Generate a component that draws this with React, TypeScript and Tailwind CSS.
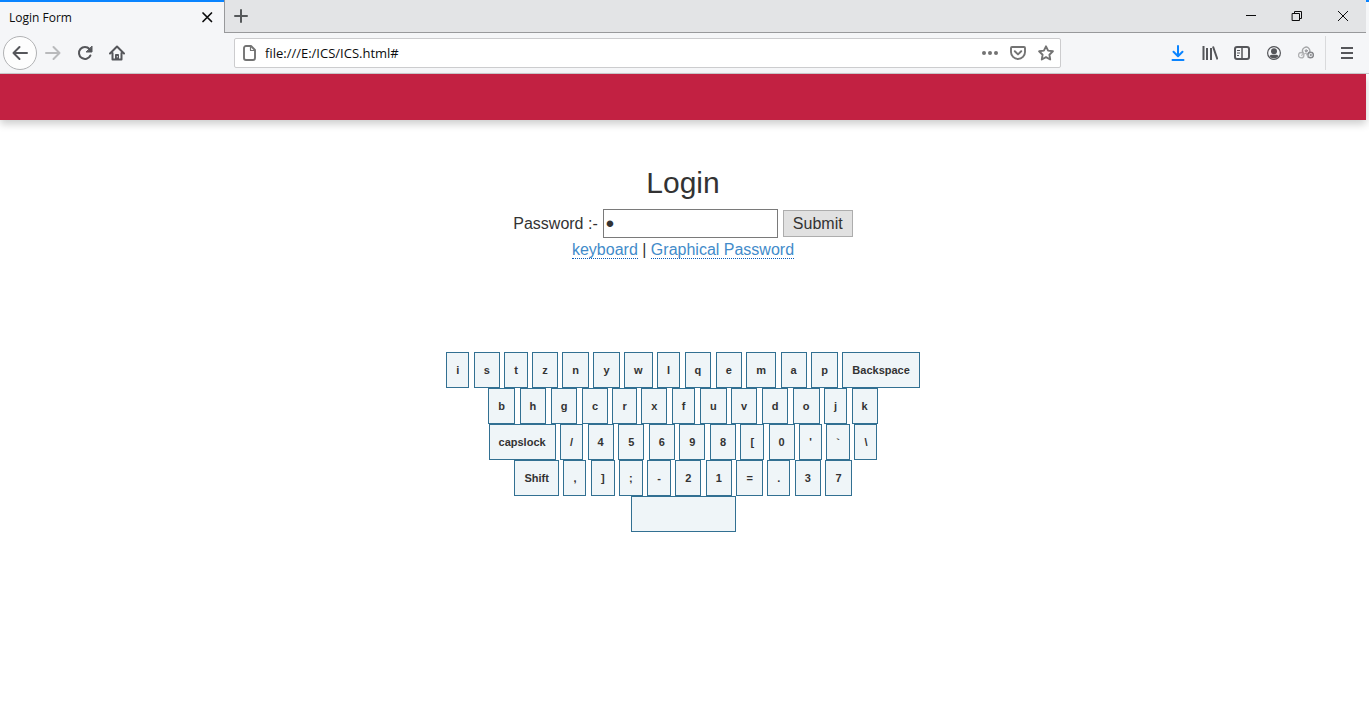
import React from 'react';

const keyRows: string[][] = [
  ['i', 's', 't', 'z', 'n', 'y', 'w', 'l', 'q', 'e', 'm', 'a', 'p', 'Backspace'],
  ['b', 'h', 'g', 'c', 'r', 'x', 'f', 'u', 'v', 'd', 'o', 'j', 'k'],
  ['capslock', '/', '4', '5', '6', '9', '8', '[', '0', "'", '`', '\\'],
  ['Shift', ',', ']', ';', '-', '2', '1', '=', '.', '3', '7'],
];

type IconProps = { children: React.ReactNode; className?: string };

function Icon({ children, className = '' }: IconProps) {
  return (
    <svg
      viewBox="0 0 16 16"
      aria-hidden="true"
      className={`block size-4 shrink-0 ${className}`}
      fill="none"
      stroke="currentColor"
      strokeWidth="2"
      strokeLinecap="round"
      strokeLinejoin="round"
    >
      {children}
    </svg>
  );
}

type ToolButtonProps = { label: string; className?: string; children: React.ReactNode };

function ToolButton({ label, className = '', children }: ToolButtonProps) {
  return (
    <button
      type="button"
      aria-label={label}
      className={`flex h-8 w-8 shrink-0 items-center justify-center ${className}`}
    >
      <Icon>{children}</Icon>
    </button>
  );
}

function TabBar() {
  return (
    <div className="flex h-[33px] bg-[#e3e4e6]">
      <div className="flex w-56 items-center justify-between border-t-2 border-[#0a84ff] bg-[#f5f6f8] pr-[9px] pl-[9px] text-xs text-[#0c0c0d]">
        <span>Login Form</span>
        <button type="button" aria-label="Close tab" className="flex items-center">
          <Icon>
            <path d="M4 3l8.500 8.500M12.500 3L4 11.500" strokeWidth="1.700" />
          </Icon>
        </button>
      </div>
      <div className="flex grow items-center justify-between border-b border-l border-[#98999b]">
        <button type="button" aria-label="New tab" className="flex h-8 w-8 items-center justify-center text-[#55585a]">
          <Icon>
            <path d="M8 2v12M2 8h12" />
          </Icon>
        </button>
        <div className="flex text-[#0c0c0d]">
          <button type="button" aria-label="Minimize" className="flex h-8 w-[46px] items-center justify-center">
            <Icon>
              <path d="M3 7.500h10" strokeWidth="1" strokeLinecap="butt" />
            </Icon>
          </button>
          <button type="button" aria-label="Restore" className="flex h-8 w-[46px] items-center justify-center">
            <Icon>
              <path d="M3.500 5.500h7v7h-7zM5.500 5.500v-2h7v7h-2" strokeWidth="1" strokeLinejoin="miter" />
            </Icon>
          </button>
          <button type="button" aria-label="Close" className="flex h-8 w-[46px] items-center justify-center">
            <Icon>
              <path d="M3 3l10 10M13 3l-10 10" strokeWidth="1" strokeLinecap="butt" />
            </Icon>
          </button>
        </div>
      </div>
      <div className="w-[3px] border-t-2 border-[#0a84ff] bg-[#f5f6f8]" />
    </div>
  );
}

function AddressBar() {
  return (
    <div className="flex h-[30px] w-[827px] min-w-0 items-center rounded-xs border border-[#ccccce] bg-white pl-1.5 text-[#737373]">
      <Icon>
        <path d="M5 1h5l4 4v8a2 2 0 0 1-2 2H5a2 2 0 0 1-2-2V3a2 2 0 0 1 2-2z" strokeWidth="1.900" />
        <path d="M9.500 1.500V5.500H14" strokeWidth="1.200" />
      </Icon>
      <input
        type="text"
        aria-label="Address"
        defaultValue="file:///E:/ICS/ICS.html#"
        className="ml-2 min-w-0 grow bg-transparent pt-0.5 text-[13px] text-[#0c0c0d] outline-none"
      />
      <button type="button" aria-label="Page actions" className="flex w-7 shrink-0 justify-center">
        <Icon>
          <g fill="currentColor" stroke="none">
            <circle cx="2" cy="8" r="2" />
            <circle cx="8" cy="8" r="2" />
            <circle cx="14" cy="8" r="2" />
          </g>
        </Icon>
      </button>
      <button type="button" aria-label="Save to Pocket" className="flex w-7 shrink-0 justify-center">
        <Icon>
          <path d="M2 2h12a1 1 0 0 1 1 1v4a7 7 0 0 1-14 0V3a1 1 0 0 1 1-1z" strokeWidth="1.900" />
          <path d="M4.800 6.300L8 9.400l3.200-3.100" />
        </Icon>
      </button>
      <button type="button" aria-label="Bookmark this page" className="flex w-7 shrink-0 justify-center">
        <Icon>
          <path
            d="M8 1.300l2.100 4.300 4.800.7-3.500 3.400.8 4.800L8 12.200l-4.200 2.300.8-4.800L1.100 6.300l4.800-.7z"
            strokeWidth="1.900"
          />
        </Icon>
      </button>
    </div>
  );
}

function Toolbar() {
  return (
    <div className="flex h-[41px] items-center border-b border-[#ccccce] bg-[#f5f6f8] pr-1.5 text-[#55565a]">
      <button
        type="button"
        aria-label="Back"
        className="ml-[3px] flex size-[34px] shrink-0 items-center justify-center rounded-full border border-[#b1b2b4] bg-[#fdfdfd]"
      >
        <Icon>
          <path d="M15 8H1.500M7.500 2l-6 6 6 6" />
        </Icon>
      </button>
      <ToolButton label="Forward" className="text-[#b9babc]">
        <path d="M1 8h13.500M8.500 2l6 6-6 6" />
      </ToolButton>
      <ToolButton label="Reload">
        <path d="M12.500 4A6 6 0 1 0 13.400 10.500" />
        <path d="M15 1.500v5.500H9.500z" fill="currentColor" strokeWidth="1" />
      </ToolButton>
      <ToolButton label="Home">
        <path d="M1 8.500L8 1.500l7 7M3.500 8v6.500h9V8" />
        <path d="M6.500 14V9.500h3V14" fill="currentColor" strokeWidth="1" />
        <path d="M8.300 11.500v.5" stroke="#f5f6f8" strokeWidth="1" />
      </ToolButton>
      <div className="flex min-w-0 grow justify-center">
        <AddressBar />
      </div>
      <ToolButton label="Downloads" className="text-[#0a84ff]">
        <path d="M8 1v10M3.500 6.800L8 11.200l4.500-4.400M2.500 15h11" />
      </ToolButton>
      <ToolButton label="Library">
        <path d="M1.500 1v14M5 3v12M9 3v12M11 1.500l4.500 13" strokeLinecap="butt" />
      </ToolButton>
      <ToolButton label="Sidebars">
        <rect x="1" y="2" width="14" height="12" rx="2" />
        <path d="M8 2v12" strokeWidth="1.500" />
        <path d="M3 5.500h3M3 8h3M3 10.500h2" strokeWidth="1" strokeLinecap="butt" />
      </ToolButton>
      <ToolButton label="Account">
        <circle cx="8" cy="8" r="6.400" strokeWidth="1.200" />
        <g fill="currentColor" stroke="none">
          <circle cx="8" cy="6.200" r="3" />
          <path d="M3.500 11c1-1.400 2.200-1.400 3-1.200h3c.8-.2 2-.2 3 1.200-1 1.600-2.600 2.300-4.500 2.300S4.500 12.600 3.500 11z" />
        </g>
      </ToolButton>
      <ToolButton label="Extension" className="text-[#85868a]">
        <circle cx="3.200" cy="10.200" r="2.700" strokeWidth="1.300" stroke="#b0b1b3" />
        <path d="M5 7.500A3.600 3.600 0 1 1 10.500 8.500" strokeWidth="1.400" stroke="#a5a6a8" />
        <circle cx="12.600" cy="10" r="2.800" strokeWidth="1.500" />
        <circle cx="8.200" cy="5.800" r="1" strokeWidth="1" />
        <circle cx="12.600" cy="10" r=".6" strokeWidth="1" />
        <path d="M3.500 10.300l4.500-2.300 2 4" strokeWidth="1.200" stroke="#b8b9bb" />
      </ToolButton>
      <div className="ml-[3px] flex h-[34px] items-center border-l border-[#d9dadc] pl-[5px]">
        <ToolButton label="Open menu">
          <path d="M2 3h12M2 8h12M2 13h12" strokeLinecap="butt" />
        </ToolButton>
      </div>
    </div>
  );
}

function LoginForm() {
  return (
    <form className="pt-[46px] text-center" onSubmit={(e) => e.preventDefault()}>
      <h1 className="mb-2.5 text-[30px] leading-[33px]">Login</h1>
      <div className="flex items-center justify-center">
        <label htmlFor="password">Password :-</label>
        <input
          id="password"
          type="password"
          defaultValue="a"
          className="mr-[5px] ml-[5px] h-[29px] w-[175px] border border-[#7a7a7a] bg-white px-0.5 text-2xl leading-6"
        />
        <button type="submit" className="h-[27px] w-[70px] border border-[#adadad] bg-[#e1e1e1] leading-6">
          Submit
        </button>
      </div>
      <p className="leading-[23px]">
        <a href="#keyboard" className="border-b border-dotted border-[#0a5db8] text-[#428bca]">
          keyboard
        </a>{' '}
        |{' '}
        <a href="#graphical" className="border-b border-dotted border-[#0a5db8] text-[#428bca]">
          Graphical Password
        </a>
      </p>
    </form>
  );
}

const keyStyle =
  'inline-block h-9 border border-[#327092] bg-[#eff5f8] px-[9px] align-top text-[11px] leading-[34px] font-bold';

function Keyboard() {
  return (
    <div id="keyboard" className="mt-[91px] text-center">
      {keyRows.map((row) => (
        <div key={row[0]}>
          {row.map((label) => (
            <React.Fragment key={label}>
              <button type="button" className={keyStyle}>
                {label}
              </button>{' '}
            </React.Fragment>
          ))}
        </div>
      ))}
      <button type="button" aria-label="Space" className={`${keyStyle} w-[105px]`} />
    </div>
  );
}

export default function App() {
  return (
    <div className="min-h-screen bg-white">
      <header className="font-['Open_Sans','Noto_Sans',sans-serif]">
        <TabBar />
        <Toolbar />
      </header>
      <main className="pr-[3px] font-['Liberation_Sans',Arial,sans-serif] text-base text-[#333333]">
        <div className="h-[46px] bg-[#c22142] shadow-[0_4px_8px_rgba(0,0,0,0.2)]" />
        <LoginForm />
        <Keyboard />
      </main>
    </div>
  );
}
